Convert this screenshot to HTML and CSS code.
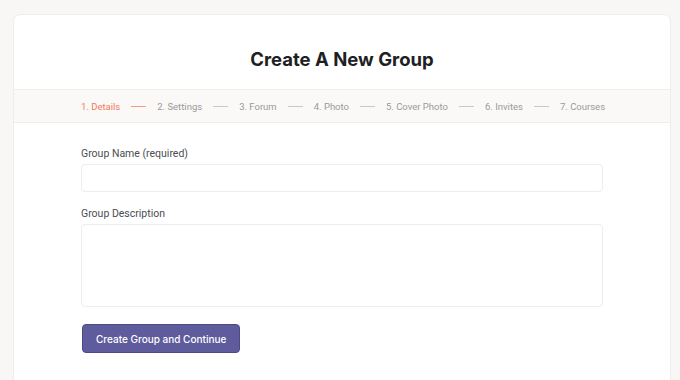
FILE: index.html
```html
<!DOCTYPE html>
<html lang="en">
<head>
    <meta charset="UTF-8">
    <meta name="viewport" content="width=device-width, initial-scale=1.0">
    <title>Create A New Group</title>
    <link rel="stylesheet" href="styles.css">
</head>
<body>

    <div class="card">
        <h1 class="title">Create A New Group</h1>

        <ol class="steps">
            <li class="step active">1. Details</li>
            <li class="sep active"></li>
            <li class="step">2. Settings</li>
            <li class="sep"></li>
            <li class="step">3. Forum</li>
            <li class="sep"></li>
            <li class="step">4. Photo</li>
            <li class="sep"></li>
            <li class="step">5. Cover Photo</li>
            <li class="sep"></li>
            <li class="step">6. Invites</li>
            <li class="sep"></li>
            <li class="step">7. Courses</li>
        </ol>

        <form class="form">
            <label class="field">
                <span class="label">Group Name (required)</span>
                <input type="text" class="input">
            </label>
            <label class="field">
                <span class="label">Group Description</span>
                <textarea class="input textarea"></textarea>
            </label>
            <div>
                <button type="button" class="btn">Create Group and Continue</button>
            </div>
        </form>
    </div>

</body>
</html>
```

FILE: styles.css
```css
* {
    margin: 0;
    padding: 0;
    box-sizing: border-box;
    font-family: Roboto, "Noto Sans", sans-serif;
}

body {
    background-color: #f8f7f5;
    padding: 14px 9px 0 13px;
    height: 380px;
    overflow: hidden;
}

.card {
    background: #fff;
    border: 1px solid #eeedeb;
    border-radius: 7px;
    height: 400px;
}

.title {
    font-family: Inter, sans-serif;
    text-align: center;
    font-size: 18.5px;
    font-weight: 700;
    color: #1e2124;
    padding: 31px 0 17px;
    line-height: 26px;
}

.steps {
    list-style: none;
    display: flex;
    justify-content: center;
    align-items: center;
    gap: 11px;
    height: 34px;
    background: #faf9f7;
    border-top: 1px solid #efeeec;
    border-bottom: 1px solid #efeeec;
    padding-left: 2px;
}

.step {
    font-size: 9.5px;
    color: #9a9a9a;
}

.step.active {
    color: #f27a5e;
}

.sep {
    width: 15px;
    height: 1px;
    background: #c9c9c9;
}

.sep.active {
    background: #f59d88;
}

.form {
    padding: 24px 67px 0 67px;
    display: flex;
    flex-direction: column;
    gap: 15px;
}

.field {
    display: flex;
    flex-direction: column;
    gap: 3px;
}

.label {
    font-size: 10.5px;
    color: #4a4d52;
    line-height: 14px;
}

.input {
    height: 28px;
    border: 1px solid #eeedeb;
    border-radius: 4px;
    background: #fff;
    outline: none;
}

.textarea {
    height: 83px;
    resize: none;
}

.btn {
    font-family: Inter, sans-serif;
    margin-top: 2px;
    background: #5e5c9c;
    border: 1px solid #4b4988;
    border-radius: 4px;
    color: #fff;
    font-size: 10px;
    font-weight: 500;
    padding: 0 13px;
    height: 29px;
    margin-left: 1px;
}
```
